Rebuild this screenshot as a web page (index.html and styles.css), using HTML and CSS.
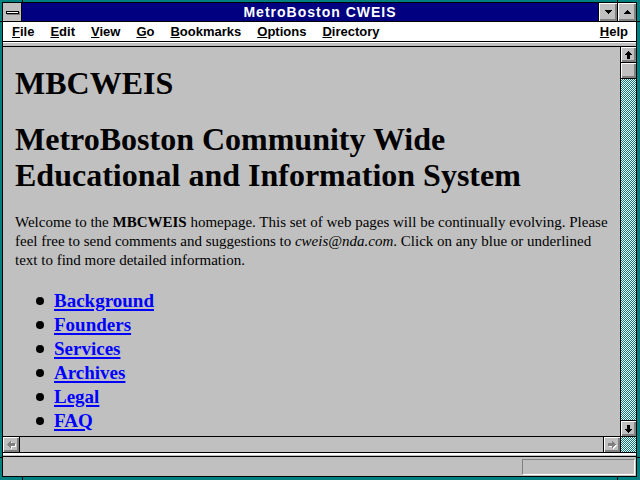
FILE: index.html
```html
<!DOCTYPE html>
<html>
<head>
<meta charset="utf-8">
<title>MetroBoston CWEIS</title>
<link rel="stylesheet" href="styles.css">
</head>
<body>
<div class="window">
  <div class="frame">
    <div class="titlebar">
      <div class="sysbox"><span class="sysbar"></span></div>
      <div class="title">MetroBoston CWEIS</div>
      <div class="tbtn"><svg width="7" height="4" viewBox="0 0 7 4" shape-rendering="crispEdges"><path d="M0 0h7v1h-1v1h-1v1h-1v1h-1v-1h-1v-1h-1v-1h-1z" fill="#000"/></svg></div>
      <div class="tbtn"><svg width="7" height="4" viewBox="0 0 7 4" shape-rendering="crispEdges"><path transform="rotate(180 3.5 2)" d="M0 0h7v1h-1v1h-1v1h-1v1h-1v-1h-1v-1h-1v-1h-1z" fill="#000"/></svg></div>
    </div>
    <div class="menubar">
      <span class="mi"><u>F</u>ile</span>
      <span class="mi"><u>E</u>dit</span>
      <span class="mi"><u>V</u>iew</span>
      <span class="mi"><u>G</u>o</span>
      <span class="mi"><u>B</u>ookmarks</span>
      <span class="mi"><u>O</u>ptions</span>
      <span class="mi"><u>D</u>irectory</span>
      <span class="mi help"><u>H</u>elp</span>
    </div>
    <div class="toolstrip"></div>
    <div class="main">
      <div class="content">
        <h1>MBCWEIS</h1>
        <h2>MetroBoston Community Wide<br>Educational and Information System</h2>
        <p>Welcome to the <b>MBCWEIS</b> homepage. This set of web pages will be continually evolving. Please feel free to send comments and suggestions to <i>cweis@nda.com</i>. Click on any blue or underlined text to find more detailed information.</p>
        <ul class="links">
          <li><a href="#">Background</a></li>
          <li><a href="#">Founders</a></li>
          <li><a href="#">Services</a></li>
          <li><a href="#">Archives</a></li>
          <li><a href="#">Legal</a></li>
          <li><a href="#">FAQ</a></li>
        </ul>
      </div>
      <div class="vscroll">
        <div class="sbtn up"><svg width="7" height="8" viewBox="0 0 7 8" shape-rendering="crispEdges"><path d="M3 0h1v1h1v1h1v1h1v1h-2v4h-3v-4h-2v-1h1v-1h1v-1h1z" fill="#000"/></svg></div>
        <div class="thumb"></div>
        <div class="track"></div>
        <div class="sbtn down"><svg width="7" height="8" viewBox="0 0 7 8" shape-rendering="crispEdges"><path transform="rotate(180 3.5 4)" d="M3 0h1v1h1v1h1v1h1v1h-2v4h-3v-4h-2v-1h1v-1h1v-1h1z" fill="#000"/></svg></div>
      </div>
    </div>
    <div class="hscroll">
      <div class="hbtn left"><svg width="9" height="8" viewBox="0 0 9 8" shape-rendering="crispEdges"><path transform="translate(1,8) rotate(-90)" d="M3 0h1v1h1v1h1v1h1v1h-2v4h-3v-4h-2v-1h1v-1h1v-1h1z" fill="#fff"/><path transform="translate(0,7) rotate(-90)" d="M3 0h1v1h1v1h1v1h1v1h-2v4h-3v-4h-2v-1h1v-1h1v-1h1z" fill="#808080"/></svg></div>
      <div class="htrack"></div>
      <div class="hbtn right"><svg width="9" height="8" viewBox="0 0 9 8" shape-rendering="crispEdges"><path transform="translate(9,1) rotate(90)" d="M3 0h1v1h1v1h1v1h1v1h-2v4h-3v-4h-2v-1h1v-1h1v-1h1z" fill="#fff"/><path transform="translate(8,0) rotate(90)" d="M3 0h1v1h1v1h1v1h1v1h-2v4h-3v-4h-2v-1h1v-1h1v-1h1z" fill="#808080"/></svg></div>
      <div class="corner"></div>
    </div>
    <div class="sep"></div>
    <div class="statusbar"><div class="statpanel"></div></div>
  </div>
  <span class="mark mk-tl"></span>
  <span class="mark mk-tr"></span>
  <span class="mark mk-bl"></span>
  <span class="mark mk-br"></span>
  <span class="mark mk-lt"></span>
  <span class="mark mk-lb"></span>
  <span class="mark mk-rt"></span>
  <span class="mark mk-rb"></span>
</div>
</body>
</html>
```
FILE: styles.css
```css
html, body {
  margin: 0;
  padding: 0;
  width: 640px;
  height: 480px;
  overflow: hidden;
  background: #008080;
}

.window {
  position: relative;
  width: 640px;
  height: 480px;
  box-sizing: border-box;
  background: #008080;
  padding: 2px 3px 3px 2px;
}

.frame {
  height: 100%;
  box-sizing: border-box;
  border: 1px solid #000;
  display: flex;
  flex-direction: column;
  background: #c0c0c0;
}

/* Title bar */
.titlebar {
  display: flex;
  height: 18px;
  flex: none;
  border-bottom: 1px solid #000;
  background: #000080;
}

.sysbox {
  width: 19px;
  flex: none;
  background: #c0c0c0;
  border-right: 1px solid #000;
  display: flex;
  justify-content: center;
  align-items: flex-start;
  padding-top: 8px;
  box-sizing: border-box;
}

.sysbar {
  display: block;
  width: 11px;
  height: 1px;
  background: #fff;
  border: 1px solid #000;
  box-shadow: 1px 1px 0 #808080;
}

.title {
  flex: 1;
  display: flex;
  align-items: center;
  justify-content: center;
  padding-left: 20px;
  color: #fff;
  font-family: "Liberation Sans", Arial, sans-serif;
  font-weight: bold;
  font-size: 14px;
  letter-spacing: 1px;
  line-height: 18px;
}

.tbtn {
  width: 18px;
  flex: none;
  border-left: 1px solid #000;
  background: #c0c0c0;
  box-shadow: inset 1px 1px 0 #fff, inset -1px -1px 0 #808080, inset -2px -2px 0 #808080;
  display: flex;
  align-items: center;
  justify-content: center;
}

.tbtn svg {
  display: block;
}

/* Menu bar */
.menubar {
  display: flex;
  flex: none;
  height: 19px;
  background: #fff;
  border-bottom: 1px solid #000;
  padding: 0 8px 0 9px;
  gap: 16px;
  font-family: "Liberation Sans", Arial, sans-serif;
  font-weight: bold;
  font-size: 13px;
  line-height: 19px;
  color: #000;
}

.mi u {
  text-underline-offset: 1px;
}

.mi.help {
  margin-left: auto;
}

.toolstrip {
  flex: none;
  height: 3px;
  border-top: 1px solid #fff;
  border-bottom: 1px solid #000;
  background: #c0c0c0;
}

/* Main area */
.main {
  flex: 1;
  min-height: 0;
  display: flex;
}

.content {
  flex: 1;
  min-width: 0;
  overflow: hidden;
  padding: 0 4px 0 12px;
  font-family: "Liberation Serif", "Times New Roman", serif;
  color: #000;
}

.content h1,
.content h2 {
  font-size: 32px;
  font-weight: bold;
  line-height: 36px;
  margin: 0;
}

.content h1 {
  margin-top: 18px;
}

.content h2 {
  margin-top: 20px;
}

.content p {
  font-size: 15px;
  line-height: 19px;
  margin: 20px 0 0;
}

.links {
  list-style: none;
  margin: 19px 0 0;
  padding: 0 0 0 21px;
  font-size: 19px;
  font-weight: bold;
  line-height: 24px;
}

.links li::before {
  content: "";
  display: inline-block;
  width: 8px;
  height: 8px;
  border-radius: 50%;
  background: #000;
  margin-right: 10px;
  vertical-align: 2px;
}

.links a {
  color: #0000ff;
  text-decoration: underline;
  text-decoration-thickness: 2px;
  text-underline-offset: 2px;
}

/* Vertical scrollbar */
.vscroll {
  width: 15px;
  flex: none;
  border-left: 1px solid #000;
  display: flex;
  flex-direction: column;
}

.sbtn,
.thumb,
.hbtn {
  background: #c0c0c0;
  box-shadow: inset 1px 1px 0 #fff, inset -1px -1px 0 #808080, inset -2px -2px 0 #808080;
  display: flex;
  align-items: center;
  justify-content: center;
}

.sbtn {
  height: 15px;
  flex: none;
}

.sbtn svg,
.hbtn svg {
  display: block;
}

.sbtn.up {
  border-bottom: 1px solid #000;
}

.sbtn.down {
  border-top: 1px solid #000;
}

.thumb {
  height: 15px;
  flex: none;
  border-bottom: 1px solid #000;
}

.track,
.corner {
  background-color: #fff;
  background-image: repeating-conic-gradient(#008080 0 25%, #fff 0 50%);
  background-size: 2px 2px;
}

.track {
  flex: 1;
}

/* Horizontal scrollbar */
.hscroll {
  flex: none;
  display: flex;
  height: 15px;
  border-top: 1px solid #000;
  border-bottom: 1px solid #000;
}

.hbtn {
  width: 16px;
  flex: none;
}

.hbtn.left {
  border-right: 1px solid #000;
}

.hbtn.right {
  border-left: 1px solid #000;
}

.htrack {
  flex: 1;
  background: #c0c0c0;
}

.corner {
  width: 15px;
  flex: none;
  border-left: 1px solid #000;
}

.sep {
  flex: none;
  height: 1px;
  border-top: 2px solid #fff;
  border-bottom: 1px solid #000;
  background: #c0c0c0;
}

/* Status bar */
.statusbar {
  flex: none;
  height: 19px;
  display: flex;
  background: #c0c0c0;
}

.statpanel {
  width: 111px;
  height: 14px;
  margin: 2px 1px 1px auto;
  border: 1px solid;
  border-color: #808080 #fff #fff #808080;
}

/* Window resize-corner marks in the frame border */
.mark {
  position: absolute;
  background: #000;
}

.mk-tl { left: 22px; top: 0; width: 1px; height: 2px; }
.mk-tr { left: 617px; top: 0; width: 1px; height: 2px; }
.mk-bl { left: 22px; bottom: 0; width: 1px; height: 3px; }
.mk-br { left: 617px; bottom: 0; width: 1px; height: 3px; }
.mk-lt { left: 0; top: 21px; width: 2px; height: 1px; }
.mk-lb { left: 0; top: 457px; width: 2px; height: 1px; }
.mk-rt { right: 0; top: 21px; width: 3px; height: 1px; }
.mk-rb { right: 0; top: 457px; width: 3px; height: 1px; }
```
